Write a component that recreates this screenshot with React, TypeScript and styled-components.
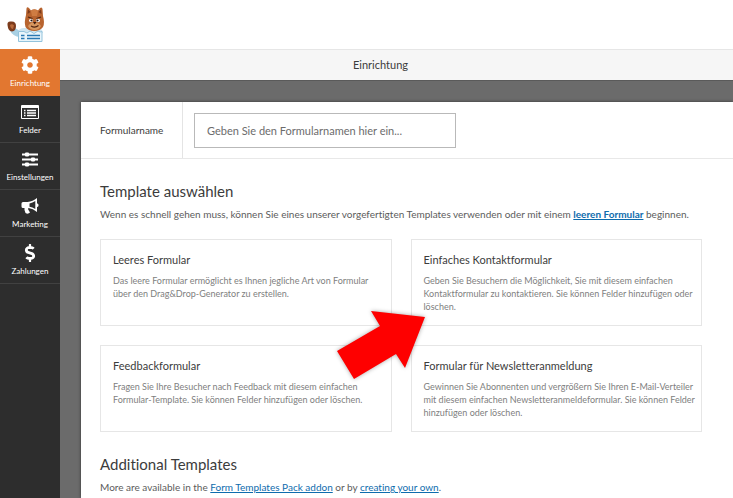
import React from 'react';
import styled, { createGlobalStyle } from 'styled-components';
import { FaCog, FaDollarSign } from 'react-icons/fa';

const GlobalStyle = createGlobalStyle`
  * { box-sizing: border-box; }
  body {
    margin: 0;
    background: #fff;
    color: #3c3c3c;
    font-family: Lato, "Open Sans", sans-serif;
    font-size: 10px;
    font-variant-ligatures: none;
    line-height: 16px;
  }
  h2, h3, p { margin: 0; font-weight: 400; }
`;

const Page = styled.div`
  display: flex;
  flex-direction: column;
  min-height: 100vh;
`;

const Header = styled.header`
  display: flex;
  align-items: center;
  height: 49px;
  padding: 0 6px;
`;

const Body = styled.div`
  display: flex;
  flex: 1;
`;

const Sidebar = styled.nav`
  flex: none;
  width: 60px;
  background: #2d2d2d;
`;

const NavButton = styled.button<{ $active?: boolean }>`
  display: flex;
  flex-direction: column;
  align-items: center;
  gap: 3px;
  width: 100%;
  height: 47px;
  padding: 7px 0 0;
  border: 0;
  border-bottom: 1px solid ${(p) => (p.$active ? '#e27730' : '#414141')};
  background: ${(p) => (p.$active ? '#e27730' : 'transparent')};
  color: #fff;
  font-family: inherit;
  font-size: 8px;
  line-height: 12px;
  cursor: pointer;
  svg { display: block; flex: none; }
`;

const Main = styled.main`
  display: flex;
  flex: 1;
  flex-direction: column;
  min-width: 0;
  background: #6b6b6b;
`;

const TitleBar = styled.div`
  display: flex;
  align-items: center;
  justify-content: center;
  height: 32px;
  padding-right: 32px;
  border-top: 1px solid #e6e6e6;
  border-bottom: 1px solid #5a5a5a;
  background: #f6f6f6;
  font-size: 11px;
`;

const Panel = styled.section`
  flex: 1;
  margin: 21px 0 0 21px;
  background: #fff;
  box-shadow: 0 0 3px #333;
`;

const NameRow = styled.div`
  display: flex;
  align-items: stretch;
  height: 57px;
  border-bottom: 1px solid #e8e8e8;
`;

const NameLabel = styled.label`
  display: flex;
  align-items: center;
  width: 102px;
  padding-left: 19px;
  border-right: 1px solid #e4e4e4;
  font-size: 10px;
`;

const NameInput = styled.input`
  width: 262px;
  height: 35px;
  margin: 11px;
  padding: 0 12px;
  border: 1px solid #b9b9b9;
  border-radius: 0;
  background: #fff;
  color: #3c3c3c;
  font-family: inherit;
  font-size: 11px;
  &::placeholder { color: #6c6c6c; opacity: 1; }
`;

const Content = styled.div`
  padding: 22px 31px 0 19px;
`;

const Heading = styled.h2`
  font-size: 15px;
  line-height: 20px;
`;

const Intro = styled.p`
  margin-top: 5px;
  color: #5c5c5c;
`;

const Link = styled.a`
  color: #0e6cad;
`;

const StrongLink = styled(Link)`
  font-weight: 700;
`;

const CardArea = styled.div`
  position: relative;
  margin: 17px 0 22px;
`;

const CardGrid = styled.div`
  display: grid;
  grid-template-columns: 1fr 1fr;
  gap: 19px;
`;

const Card = styled.article`
  min-height: 87px;
  padding: 12px 4px 12px 12px;
  border: 1px solid #e6e6e6;
`;

const CardTitle = styled.h3`
  font-size: 11px;
  line-height: 16px;
`;

const CardText = styled.p`
  margin-top: 6px;
  color: #808080;
  font-size: 9px;
  line-height: 13px;
`;

const Arrow = styled.svg`
  position: absolute;
  top: 69px;
  left: 234px;
  pointer-events: none;
  filter: drop-shadow(0 0 2px rgba(0, 0, 0, 0.35));
`;

const Logo = () => (
  <svg width="40" height="38" viewBox="6 6 40 38" role="img" aria-label="WPForms">
    <path d="M9 29 15 28 20 31V37Q13 37 9 29Z" fill="#a9d0e3" />
    <path d="M7.500 25Q7 21 11 21.500Q16 21 16 26Q16 31 12 31.500Q8 31 7.500 25Z" fill="#7c3b1c" />
    <path d="M10 25Q12 23.500 14 25.500L13 29Q10.500 29 10 25Z" fill="#b96a3a" />
    <path d="M18 32Q19 28 24 28H38Q42 28 43 33Z" fill="#cfe4ef" />
    <path d="M26 15 26.500 8.500Q27 6.500 29 8L31 10.500Q34 8 38 10.500L40 8Q42 6.500 42.500 9L43 16Q45 23 43 27Q40 31 34.500 31Q28 31 25.500 27Q24 22 26 15Z" fill="#b8642f" />
    <path d="M27.500 14 28 9.500 30.500 12ZM41.500 14 41 9.500 38.500 12Z" fill="#7a3a1c" />
    <path d="M31 11Q34.500 8 38 11L37 16H32Z" fill="#cf7c42" />
    <path d="M28 17 32.500 18.500M36.500 18.500 41 17" stroke="#4f2411" strokeWidth="1.300" />
    <ellipse cx="31" cy="20.500" rx="2" ry="1.700" fill="#fff" />
    <ellipse cx="38" cy="20.500" rx="2" ry="1.700" fill="#fff" />
    <circle cx="31.500" cy="20.500" r="1.100" fill="#2d160c" />
    <circle cx="37.500" cy="20.500" r="1.100" fill="#2d160c" />
    <path d="M28 26Q31 22 34.500 22Q38 22 41 26Q39 30 34.500 30Q30 30 28 26Z" fill="#d8975f" />
    <path d="M33 22H36.500L34.700 24.500Z" fill="#39190e" />
    <path d="M31 26Q35 28.500 38.500 25.500" fill="none" stroke="#4f2411" strokeWidth="1.100" />
    <path d="M18.500 31.500H24L27 33 30 31 34 33.500 38 31 40 32 42 31.500V41.500H18.500Z" fill="#e9f5fb" stroke="#93c3dc" />
    <path d="M21 35.500H24.500M21 38.500H24.500M27 35.500H40M27 38.500H40" stroke="#2a78b2" strokeWidth="1.400" />
  </svg>
);

const FormIcon = () => (
  <svg width="18" height="18" viewBox="0 0 18 18" aria-hidden="true">
    <rect x="0" y="2" width="18" height="14" rx="1" fill="#fff" />
    <path d="M1 5H17V15H1Z" fill="#2d2d2d" />
    <path d="M3 7.500H4.500M3 10H4.500M3 12.500H4.500M6 7.500H15M6 10H15M6 12.500H15" stroke="#fff" strokeWidth="1.300" />
  </svg>
);

const SlidersIcon = () => (
  <svg width="18" height="18" viewBox="0 0 18 18" aria-hidden="true">
    <path d="M1 4.500H17M1 9.500H17M1 14.500H17" stroke="#fff" strokeWidth="1.800" />
    <path
      d="M5 2.500H7Q8 2.500 8 3.500V5.500Q8 6.500 7 6.500H5Q4 6.500 4 5.500V3.500Q4 2.500 5 2.500ZM11 7.500H13Q14 7.500 14 8.500V10.500Q14 11.500 13 11.500H11Q10 11.500 10 10.500V8.500Q10 7.500 11 7.500ZM5 12.500H7Q8 12.500 8 13.500V15.500Q8 16.500 7 16.500H5Q4 16.500 4 15.500V13.500Q4 12.500 5 12.500Z"
      fill="#fff"
    />
  </svg>
);

const HornIcon = () => (
  <svg width="18" height="18" viewBox="0 0 18 18" aria-hidden="true">
    <path
      fill="#fff"
      fillRule="evenodd"
      d="M16 1V6.200Q18 7 17.500 9Q17 10 16 10V15Q12 11.500 7.500 11Q6.500 12.200 7.500 13L9 15.500Q7 17.500 4.500 16Q3 13 3.500 11H2Q.5 11 .5 9.500V6.500Q.5 5 2 5H6.500Q12 4.500 16 1ZM14.300 4Q11.500 6 8.500 6.400V9.700Q11.500 10 14.300 12Z"
    />
  </svg>
);

const navItems = [
  { label: 'Einrichtung', icon: <FaCog size={18} />, active: true },
  { label: 'Felder', icon: <FormIcon /> },
  { label: 'Einstellungen', icon: <SlidersIcon /> },
  { label: 'Marketing', icon: <HornIcon /> },
  { label: 'Zahlungen', icon: <FaDollarSign size={18} /> },
];

const templates = [
  {
    title: 'Leeres Formular',
    text: 'Das leere Formular ermöglicht es Ihnen jegliche Art von Formular über den Drag&Drop-Generator zu erstellen.',
  },
  {
    title: 'Einfaches Kontaktformular',
    text: 'Geben Sie Besuchern die Möglichkeit, Sie mit diesem einfachen Kontaktformular zu kontaktieren. Sie können Felder hinzufügen oder löschen.',
  },
  {
    title: 'Feedbackformular',
    text: 'Fragen Sie Ihre Besucher nach Feedback mit diesem einfachen Formular-Template. Sie können Felder hinzufügen oder löschen.',
  },
  {
    title: 'Formular für Newsletteranmeldung',
    text: 'Gewinnen Sie Abonnenten und vergrößern Sie Ihren E-Mail-Verteiler mit diesem einfachen Newsletteranmeldeformular. Sie können Felder hinzufügen oder löschen.',
  },
];

export default function App() {
  return (
    <Page>
      <GlobalStyle />
      <Header>
        <Logo />
      </Header>
      <Body>
        <Sidebar>
          {navItems.map((item) => (
            <NavButton key={item.label} type="button" $active={item.active}>
              {item.icon}
              {item.label}
            </NavButton>
          ))}
        </Sidebar>
        <Main>
          <TitleBar>Einrichtung</TitleBar>
          <Panel>
            <NameRow>
              <NameLabel htmlFor="form-name">Formularname</NameLabel>
              <NameInput id="form-name" type="text" placeholder="Geben Sie den Formularnamen hier ein..." />
            </NameRow>
            <Content>
              <Heading>Template auswählen</Heading>
              <Intro>
                Wenn es schnell gehen muss, können Sie eines unserer vorgefertigten Templates verwenden oder mit einem{' '}
                <StrongLink href="#blank">leeren Formular</StrongLink> beginnen.
              </Intro>
              <CardArea>
                <CardGrid>
                  {templates.map((template) => (
                    <Card key={template.title}>
                      <CardTitle>{template.title}</CardTitle>
                      <CardText>{template.text}</CardText>
                    </Card>
                  ))}
                </CardGrid>
                <Arrow width="94" height="74" viewBox="0 0 94 74" aria-hidden="true">
                  <path d="M37 3 91 9 71 60 62 46 20 71 3 43 46 18Z" fill="#fe0000" />
                </Arrow>
              </CardArea>
              <Heading>Additional Templates</Heading>
              <Intro>
                More are available in the <Link href="#addon">Form Templates Pack addon</Link> or by{' '}
                <Link href="#create">creating your own</Link>.
              </Intro>
            </Content>
          </Panel>
        </Main>
      </Body>
    </Page>
  );
}
